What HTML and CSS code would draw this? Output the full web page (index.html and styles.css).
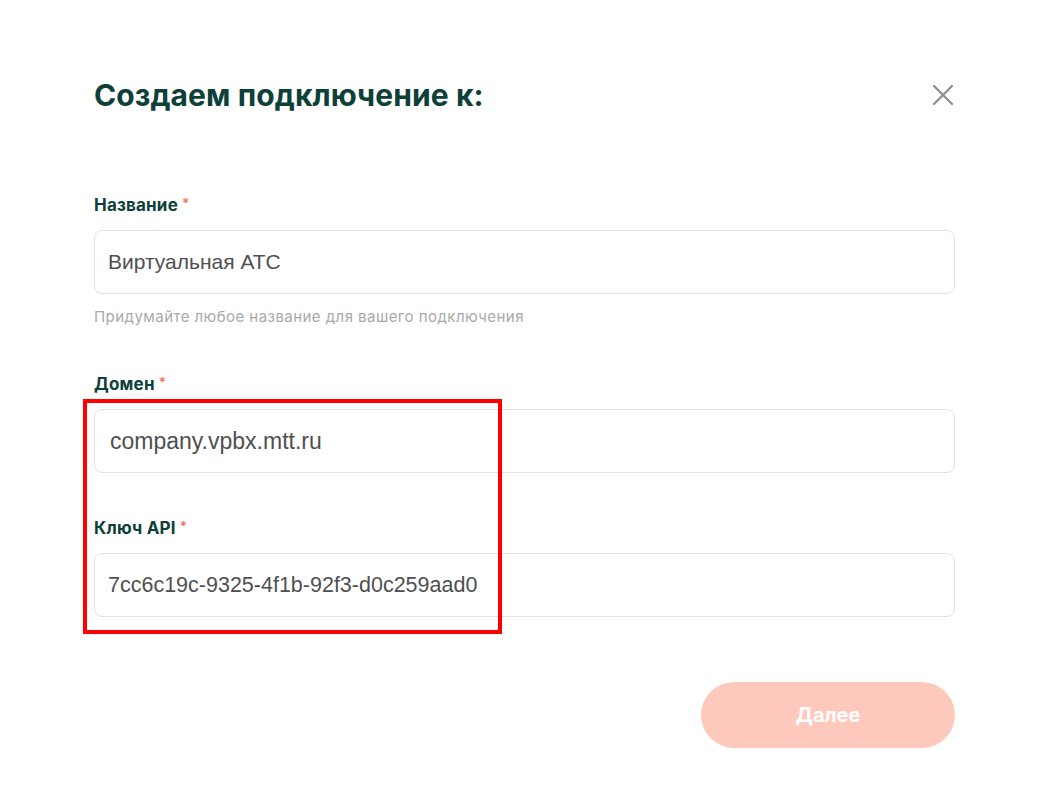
FILE: index.html
```html
<!DOCTYPE html>
<html lang="ru">
<head>
<meta charset="utf-8">
<title>Создаем подключение</title>
<link rel="stylesheet" href="styles.css">
</head>
<body>
<div class="modal">
  <header class="modal-header">
    <h1 class="modal-title">Создаем подключение к:</h1>
    <button class="close-btn" aria-label="Закрыть">
      <svg width="20" height="20" viewBox="0 0 20 20"><path d="M1 1L19 19M19 1L1 19" stroke="#8e8e8e" stroke-width="2.2" stroke-linecap="round"/></svg>
    </button>
  </header>

  <div class="field field-name">
    <label class="field-label">Название<span class="req">*</span></label>
    <div class="input"><span class="input-text">Виртуальная АТС</span></div>
    <p class="hint">Придумайте любое название для вашего подключения</p>
  </div>

  <div class="field field-domain">
    <label class="field-label">Домен<span class="req">*</span></label>
    <div class="group">
      <div class="highlight"></div>
      <div class="input"><span class="input-text domain">company.vpbx.mtt.ru</span></div>
      <label class="field-label label-key">Ключ API<span class="req">*</span></label>
      <div class="input"><span class="input-text key">7cc6c19c-9325-4f1b-92f3-d0c259aad0</span></div>
    </div>
  </div>

  <div class="actions">
    <button class="next-btn">Далее</button>
  </div>
</div>
</body>
</html>
```

FILE: styles.css
```css
html, body {
  margin: 0;
  padding: 0;
  background: #ffffff;
}

.modal {
  width: 861px;
  padding: 72px 0 0 94px;
  font-family: Inter, "Open Sans", sans-serif;
  color: #0f3f36;
}

.modal-header {
  display: flex;
  justify-content: space-between;
  align-items: center;
  height: 46px;
}

.modal-title {
  margin: 0;
  font-size: 30px;
  font-weight: 700;
  letter-spacing: 0.1px;
  color: #0c4038;
}

.close-btn {
  border: 0;
  background: none;
  padding: 0;
  width: 20px;
  height: 20px;
  margin-right: 2px;
  display: flex;
}

.field-name {
  margin-top: 75px;
}

.field-label {
  display: block;
  font-size: 17px;
  font-weight: 700;
  line-height: 20px;
  color: #0c4038;
  letter-spacing: 0.2px;
  margin-bottom: 15px;
}

.req {
  color: #f27a62;
  font-size: 13px;
  margin-left: 4px;
  vertical-align: 3px;
}

.input {
  height: 62px;
  border: 1px solid #e2e2e2;
  border-radius: 8px;
  display: flex;
  align-items: center;
  padding: 0 13px;
}

.input-text {
  font-family: "Liberation Sans", Arial, sans-serif;
  font-size: 21px;
  color: #4f4f4f;
}

.input-text.domain {
  font-size: 23px;
  margin-left: 2px;
}

.input-text.key {
  font-size: 21.5px;
}

.hint {
  margin: 13px 0 0;
  font-size: 15px;
  color: #a9a9a9;
  letter-spacing: 0.45px;
}

.field-domain {
  margin-top: 46px;
}

.group {
  position: relative;
}

.highlight {
  position: absolute;
  left: -11px;
  top: -10px;
  width: 411px;
  height: 227px;
  border: 4px solid #ff0000;
  pointer-events: none;
}

.label-key {
  margin-top: 43px;
}

.actions {
  display: flex;
  justify-content: flex-end;
  margin-top: 65px;
}

.next-btn {
  width: 254px;
  height: 66px;
  border: 0;
  border-radius: 33px;
  background: #fec9bc;
  color: #ffffff;
  font-family: Inter, "Open Sans", sans-serif;
  font-size: 20px;
  font-weight: 700;
}
```
